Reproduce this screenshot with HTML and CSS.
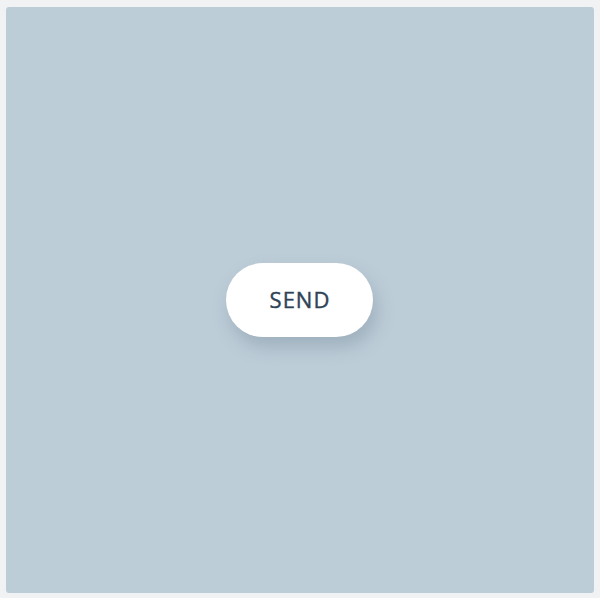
FILE: index.html
```html
<!DOCTYPE html>
<html>
<head>
<meta charset="utf-8">
<link rel="stylesheet" href="styles.css">
</head>
<body>
<div class="panel">
  <button class="send">SEND</button>
</div>
</body>
</html>
```
FILE: styles.css
```css
html, body {
  margin: 0;
  padding: 0;
  background: #f1f2f3;
}
body {
  padding: 7px 6px 5px 6px;
}
.panel {
  height: 586px;
  background: #bdcdd8;
  border-radius: 3px;
  display: flex;
  align-items: center;
  justify-content: center;
}
.send {
  width: 147px;
  height: 74px;
  border: none;
  border-radius: 37px;
  background: #fff;
  color: #2f4356;
  font-family: "Open Sans", sans-serif;
  font-size: 22px;
  font-weight: 400;
  -webkit-text-stroke: 0.4px #2f4356;
  letter-spacing: 1px;
  line-height: 1;
  box-shadow: 4px 10px 18px rgba(90, 110, 130, 0.3);
  padding: 0 0 2px 1px;
  margin-left: -1px;
}
```
